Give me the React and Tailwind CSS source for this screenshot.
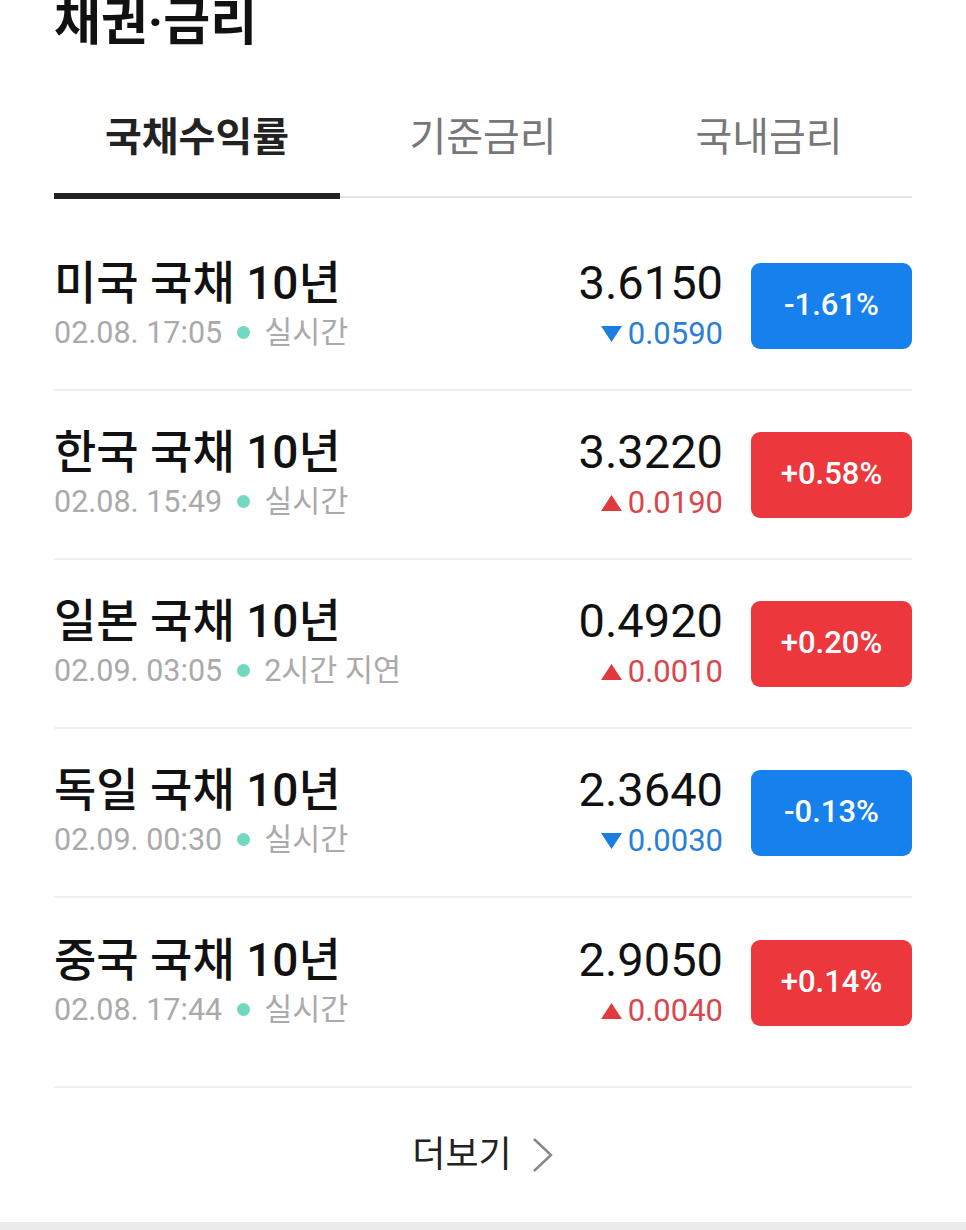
import React from "react";

const rows = [
  { name: "미국 국채 10년", time: "02.08. 17:05", status: "실시간", value: "3.6150", change: "0.0590", pct: "-1.61%", up: false },
  { name: "한국 국채 10년", time: "02.08. 15:49", status: "실시간", value: "3.3220", change: "0.0190", pct: "+0.58%", up: true },
  { name: "일본 국채 10년", time: "02.09. 03:05", status: "2시간 지연", value: "0.4920", change: "0.0010", pct: "+0.20%", up: true },
  { name: "독일 국채 10년", time: "02.09. 00:30", status: "실시간", value: "2.3640", change: "0.0030", pct: "-0.13%", up: false },
  { name: "중국 국채 10년", time: "02.08. 17:44", status: "실시간", value: "2.9050", change: "0.0040", pct: "+0.14%", up: true },
];

const font = { fontFamily: 'Roboto, "Noto Sans CJK KR", sans-serif' };

function Row({ r, last }) {
  return (
    <div className={`flex items-center h-[169px] ${last ? "" : "border-b-2 border-[#efefef]"}`}>
      <div className="flex-1 flex flex-col">
        <div className="text-[46px] leading-[48px] font-medium text-[#111]">{r.name}</div>
        <div className="flex items-center text-[30.5px] leading-[40px] text-[#aaaaaa] mt-[6px]">
          <span>{r.time}</span>
          <span className="w-[13px] h-[13px] rounded-full bg-[#72d8bf] ml-[15px] mr-[14px]"></span>
          <span>{r.status}</span>
        </div>
      </div>
      <div className="flex flex-col items-end">
        <div className="text-[47px] leading-[52px] text-[#111]">{r.value}</div>
        <div className={`flex items-center text-[31px] leading-[40px] mt-[5px] ${r.up ? "text-[#d9474c]" : "text-[#2a7fd4]"}`}>
          <svg width="21" height="16" viewBox="0 0 21 16" className="mr-[6px]">
            {r.up ? (
              <polygon points="10.5,0 21,16 0,16" fill="#e0393e" />
            ) : (
              <polygon points="0,0 21,0 10.5,16" fill="#1a7de0" />
            )}
          </svg>
          <span>{r.change}</span>
        </div>
      </div>
      <div className={`ml-[28px] w-[161px] h-[86px] rounded-[9px] flex items-center justify-center text-white text-[31px] font-medium ${r.up ? "bg-[#ec383d]" : "bg-[#1681ec]"}`}>
        {r.pct}
      </div>
    </div>
  );
}

export default function App() {
  return (
    <div className="w-[966px] h-[1230px] bg-white flex flex-col overflow-hidden" style={font}>
      <div className="px-[54px] flex-1 flex flex-col">
        <div className="text-[51px] font-bold text-[#111] leading-[54px] mt-[-4px]">채권·금리</div>
        <div className="mt-[30px] flex border-b-2 border-[#e6e6e6]">
          <div className="flex-1 flex justify-center items-center h-[116px] text-[40px] font-bold text-[#222] relative">
            국채수익률
            <div className="absolute left-0 right-0 bottom-[-3px] h-[6px] bg-[#222]"></div>
          </div>
          <div className="flex-1 flex justify-center items-center h-[116px] text-[40px] text-[#777]">기준금리</div>
          <div className="flex-1 flex justify-center items-center h-[116px] text-[40px] text-[#777]">국내금리</div>
        </div>
        <div className="pt-[24px] flex flex-col">
          {rows.slice(0, 4).map((r) => (
            <Row key={r.name} r={r} />
          ))}
          <div className="pb-[19px] border-b-2 border-[#efefef]">
            <Row r={rows[4]} last />
          </div>
        </div>
        <div className="flex-1 flex items-center justify-center text-[36px] text-[#222] gap-[20px]">
          <span>더보기</span>
          <svg width="22" height="36" viewBox="0 0 22 36">
            <polyline points="2,2 19,18 2,34" fill="none" stroke="#888" strokeWidth="2.5" />
          </svg>
        </div>
      </div>
      <div className="h-[8px] bg-[#ececec]"></div>
    </div>
  );
}
